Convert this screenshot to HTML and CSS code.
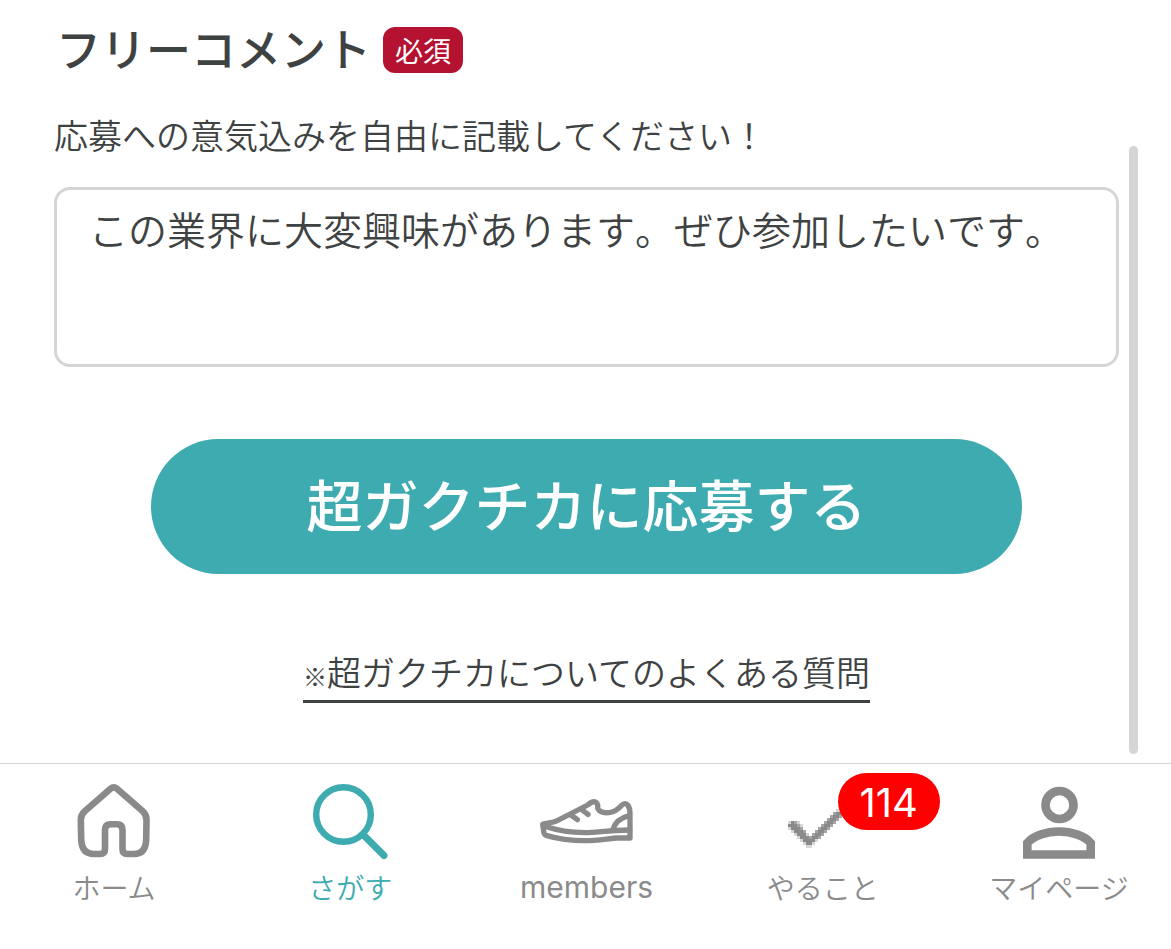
FILE: index.html
```html
<!DOCTYPE html>
<html lang="ja">
<head>
<meta charset="utf-8">
<meta name="viewport" content="width=device-width, initial-scale=1">
<title>超ガクチカに応募する</title>
<link rel="stylesheet" href="styles.css">
</head>
<body>
<div class="page">
  <main class="content">
    <form class="form">
      <div class="heading">
        <label class="title" for="comment">フリーコメント</label>
        <span class="required">必須</span>
      </div>
      <p class="hint" id="hint">応募への意気込みを自由に記載してください！</p>
      <textarea class="comment" id="comment" aria-describedby="hint">この業界に大変興味があります。ぜひ参加したいです。</textarea>
      <button class="submit" type="button">超ガクチカに応募する</button>
      <a class="faq" href="#faq"><span class="mark">※</span>超ガクチカについてのよくある質問</a>
    </form>
    <div class="scrollbar"></div>
  </main>
  <nav class="tabs">
    <a class="tab" href="#home">
      <svg class="icon" width="74" height="76" viewBox="0 0 74 76" fill="none" stroke="currentColor" stroke-width="6.6" stroke-linejoin="round"><path d="M33.5 5.8Q36.7 3 40 5.8L65.500 28Q69.500 31.500 69.500 37L69.200 56Q69 71 57 71H50.500Q45.500 71 45.500 66V47Q45.500 41.200 40 41.200H33.500Q28 41.200 28 47V66Q28 71 23 71H17Q4.500 71 4.200 56L3.800 37Q3.800 31.500 8 28Z"/></svg>
      <span class="label">ホーム</span>
    </a>
    <a class="tab active" href="#search" aria-current="page">
      <svg class="icon" width="76" height="76" viewBox="0 0 76 76" fill="none" stroke="currentColor" stroke-linecap="round"><circle cx="31.500" cy="31.500" r="27.300" stroke-width="6.400"/><path d="M51 51.500L72 72.500" stroke-width="7"/></svg>
      <span class="label">さがす</span>
    </a>
    <a class="tab" href="#members">
      <svg class="icon" width="94" height="76" viewBox="90 9 282 228" fill="none" stroke="currentColor" stroke-width="16" stroke-linejoin="round" stroke-linecap="round"><path d="M98 133C112 129 128 129 142 122L233 75Q248 61 258 67Q265 72 263 85C268 97 283 99 296 98C313 97 322 91 335 76Q345 66 353 75Q360 84 360 101V174H318C286 177 258 182 225 182C182 182 141 176 108 166Q102 164 101 154Z"/><path d="M104 139C143 152 178 158 225 158C264 158 290 150 359 150"/><path d="M309 148C315 127 333 113 358 107M187 108L202 119M219 92L234 103"/></svg>
      <span class="label latin">members</span>
    </a>
    <a class="tab" href="#todo">
      <svg class="icon" width="76" height="76" viewBox="0 0 76 76" fill="none" stroke="currentColor">
        <g transform="translate(3 38) scale(3)">
          <path stroke-opacity=".35" d="M0 .5h4M0 1.500h5M0 2.500h5M1 3.500h5M2 4.500h5M3 5.500h8M4 6.500h6M5 7.500h4M6 8.500h2M8 4.500h4M9 3.500h4M10 2.500h4M11 1.500h4M12 .5h4M13 -.5h4M14 -1.500h4M15 -2.500h4M16 -3.500h3"/>
          <path d="M1 .5h1M0 1.500h3M1 2.500h3M2 3.500h3M3 4.500h3M4 5.500h3M8 5.500h2M5 6.500h4M6 7.500h2M9 4.500h2M10 3.500h2M11 2.500h2M12 1.500h2M13 .5h2M14 -.5h2M15 -1.500h2M16 -2.500h2"/>
          <path stroke-opacity=".65" d="M2 .5h1M3 1.500h1M4 2.500h1M5 3.500h1M7 5.500h1M8 4.500h1M9 3.500h1M10 2.500h1M11 1.500h1M12 .5h1M13 -.5h1M14 -1.500h1M15 -2.500h1M10 5.500h1M11 4.500h1M12 3.500h1M13 2.500h1M14 1.500h1M15 .5h1M16 -.5h1M17 -1.500h1"/>
        </g>
      </svg>
      <span class="badge">114</span>
      <span class="label">やること</span>
    </a>
    <a class="tab" href="#mypage">
      <svg class="icon" width="72" height="76" viewBox="0 0 72 76" fill="none" stroke="currentColor" stroke-width="8.600"><circle cx="36.500" cy="22" r="14"/><path d="M4.300 71.500V60C10 53 23 48.500 36 48.500S62 53 67.700 60V71.500Z"/></svg>
      <span class="label">マイページ</span>
    </a>
  </nav>
</div>
</body>
</html>
```
FILE: styles.css
```css
* { box-sizing: border-box; }

body {
  margin: 0;
  background: #fff;
  color: #3e4242;
  font-family: "Noto Sans CJK JP", sans-serif;
}

.page {
  display: flex;
  flex-direction: column;
  min-height: 100vh;
}

.content {
  position: relative;
  flex: 1;
  padding: 16px 52px 60px 54px;
}

.form {
  display: flex;
  flex-direction: column;
}

.heading {
  display: flex;
  align-items: center;
  gap: 12px;
  height: 68px;
  padding-left: 2px;
}

.title {
  padding-bottom: 4px;
  font-size: 45px;
  font-weight: 500;
  line-height: 64px;
}

.required {
  padding: 0 12px;
  border-radius: 12px;
  background: #b51130;
  color: #fff;
  font-size: 28px;
  line-height: 46px;
}

.hint {
  margin: 25px 0 27px;
  font-size: 34px;
  font-weight: 350;
  line-height: 51px;
}

.comment {
  display: block;
  width: 100%;
  height: 180px;
  padding: 9px 24px 9px 32px;
  border: 3px solid #d5d5d5;
  border-radius: 16px;
  background: #fff;
  color: inherit;
  font-family: inherit;
  font-kerning: none;
  font-size: 39px;
  font-weight: 350;
  line-height: 58px;
  resize: none;
  outline: none;
}

.submit {
  margin: 72px 97px 0;
  padding: 0 0 8px;
  height: 135px;
  border: 0;
  border-radius: 68px;
  background: #3dabaf;
  color: #fff;
  font-family: inherit;
  font-size: 56px;
  font-weight: 500;
}

.faq {
  align-self: center;
  margin-top: 72px;
  padding-bottom: 2px;
  border-bottom: 3px solid currentColor;
  color: inherit;
  font-size: 34px;
  font-weight: 350;
  line-height: 52px;
  text-decoration: none;
}

.mark {
  font-size: 24px;
  font-weight: 900;
  line-height: 1;
}

.scrollbar {
  position: absolute;
  top: 146px;
  right: 33px;
  bottom: 9px;
  width: 9px;
  border-radius: 5px;
  background: #d5d5d5;
}

.tabs {
  display: flex;
  justify-content: space-between;
  height: 186px;
  padding: 19px 31px 0 33px;
  border-top: 1px solid #d5d5d5;
}

.tab {
  position: relative;
  display: flex;
  flex-direction: column;
  align-items: center;
  width: 162px;
  color: #8a8a8a;
  text-decoration: none;
}

.tab.active { color: #3dabaf; }

.icon {
  display: block;
  overflow: visible;
}

.label {
  margin-top: 8px;
  font-size: 28px;
  font-weight: 350;
  line-height: 40px;
  white-space: nowrap;
}

.latin {
  font-family: Inter, sans-serif;
  font-size: 30px;
  font-weight: 400;
}

.badge {
  position: absolute;
  top: -10px;
  left: 96px;
  width: 102px;
  padding-top: 3px;
  border-radius: 29px;
  background: #f00;
  color: #fff;
  font-family: Inter, sans-serif;
  font-size: 40px;
  line-height: 54px;
  text-align: center;
}
```
